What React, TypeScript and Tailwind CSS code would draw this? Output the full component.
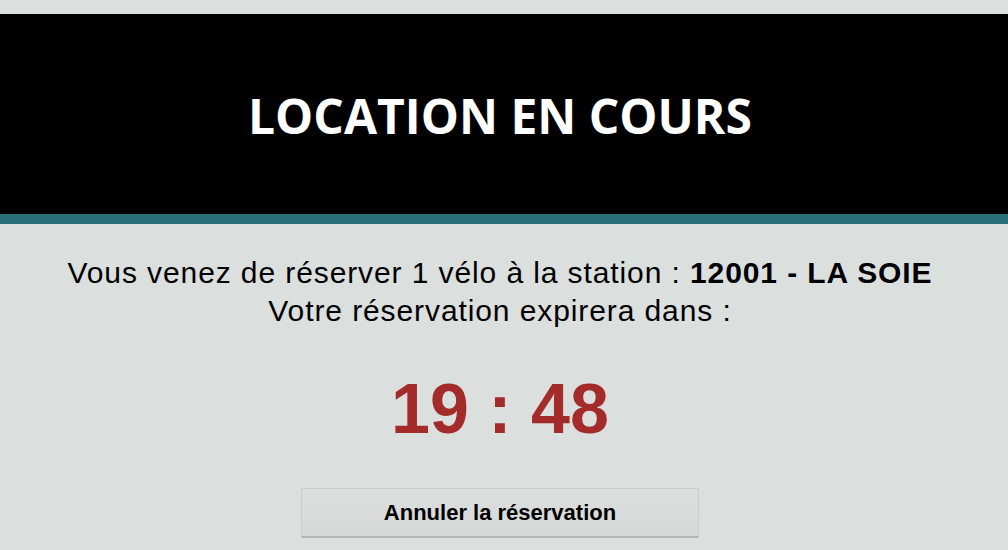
export default function App() {
  return (
    <div className="min-h-[550px] w-full bg-[#dbdfde] pt-[14px]" style={{ fontFamily: '"Liberation Sans", Arial, sans-serif' }}>
      <div className="flex h-[200px] items-center justify-center bg-black pr-[8px] pt-[4px]">
        <h1 className="text-[48px] font-bold leading-none text-white" style={{ fontFamily: '"Open Sans", sans-serif' }}>
          LOCATION EN COURS
        </h1>
      </div>
      <div className="h-[10px] bg-[#2a6e77]" />
      <div className="flex flex-col items-center pr-[8px] pt-[30px] text-black">
        <p className="text-center text-[30px] leading-[38px] tracking-[0.9px]">
          Vous venez de réserver 1 vélo à la station : <b>12001 - LA SOIE</b>
          <br />
          Votre réservation expirera dans :
        </p>
        <div className="mt-[39px] text-[70px] font-bold leading-[80px] text-[#a32b2a]">19 : 48</div>
        <button className="mt-[39px] h-[50px] w-[398px] border border-[#c9cccb] border-b-2 border-b-[#b4b7b6] bg-gradient-to-b from-[#dcdfde] to-[#d5d8d7] text-[22px] font-bold text-black">
          Annuler la réservation
        </button>
      </div>
    </div>
  );
}
